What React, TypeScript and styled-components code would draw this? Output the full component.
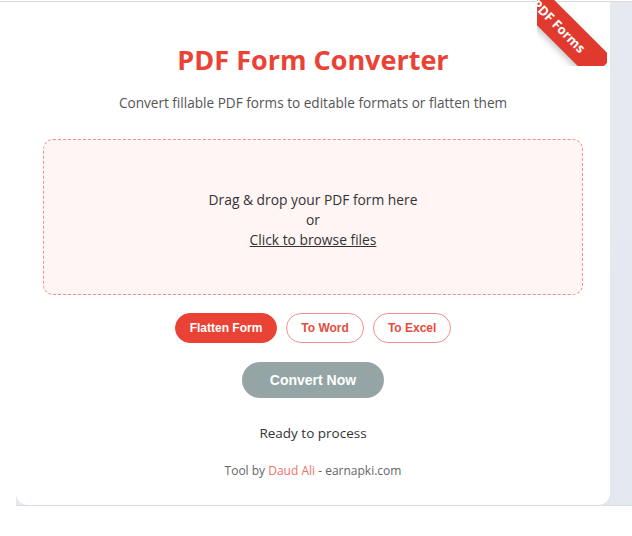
import React from 'react';
import styled, { createGlobalStyle } from 'styled-components';

const GlobalStyle = createGlobalStyle`
  html, body {
    margin: 0;
    padding: 0;
    background: #ffffff;
  }
  body {
    font-family: 'Open Sans', 'Noto Sans', sans-serif;
    color: #333333;
  }
  * {
    box-sizing: border-box;
  }
`;

const TopRule = styled.div`
  height: 2px;
  border-bottom: 1px solid #dcdcdc;
`;

const Stage = styled.div`
  margin-left: 16px;
  padding-right: 22px;
  background: linear-gradient(180deg, #e6e9f0 0%, #e3e7ef 100%);
  border-bottom: 1px solid #dadde3;
`;

const Card = styled.div`
  position: relative;
  width: 594px;
  height: 503px;
  background: #ffffff;
  border-radius: 0 0 12px 12px;
  padding: 40px 27px 0;
  display: flex;
  flex-direction: column;
  align-items: center;
`;

const RibbonBox = styled.div`
  position: absolute;
  top: -8px;
  right: 3px;
  width: 70px;
  height: 72px;
  overflow: hidden;
`;

const Ribbon = styled.span`
  position: absolute;
  left: -38px;
  top: 17px;
  width: 120px;
  height: 30px;
  line-height: 30px;
  background: #e03a2f;
  color: #ffffff;
  font-weight: 700;
  font-size: 13px;
  text-align: center;
  transform: rotate(45deg);
  box-shadow: 0 3px 6px rgba(0, 0, 0, 0.22);
`;

const Title = styled.h1`
  margin: 0;
  font-size: 27px;
  line-height: 36px;
  font-weight: 700;
  color: #ea4335;
`;

const Subtitle = styled.p`
  margin: 15px 0 0;
  font-size: 13.6px;
  line-height: 20px;
  color: #555555;
`;

const DropZone = styled.div`
  margin-top: 26px;
  width: 100%;
  height: 156px;
  padding-top: 6px;
  border: 1px dashed #f0908a;
  border-radius: 10px;
  background: #fff5f4;
  display: flex;
  flex-direction: column;
  align-items: center;
  justify-content: center;
  font-size: 13.8px;
  line-height: 20px;
  color: #333333;
`;

const Browse = styled.span`
  text-decoration: underline;
  cursor: pointer;
`;

const Options = styled.div`
  margin-top: 18px;
  display: flex;
  gap: 9px;
`;

const Option = styled.button<{ $active?: boolean }>`
  height: 30px;
  padding: 0 14px;
  border-radius: 15px;
  border: 1px solid ${(p) => (p.$active ? '#ea4335' : '#f0908a')};
  background: ${(p) => (p.$active ? '#ea4335' : '#ffffff')};
  color: ${(p) => (p.$active ? '#ffffff' : '#e74c3c')};
  font-family: 'Liberation Sans', Arial, sans-serif;
  font-weight: 700;
  font-size: 12px;
  cursor: pointer;
`;

const ConvertButton = styled.button`
  margin-top: 19px;
  height: 36px;
  width: 142px;
  border: none;
  border-radius: 18px;
  background: #95a5a6;
  color: #ffffff;
  font-family: 'Liberation Sans', Arial, sans-serif;
  font-weight: 700;
  font-size: 14px;
  cursor: pointer;
`;

const Status = styled.div`
  margin-top: 25px;
  font-size: 13.5px;
  line-height: 20px;
  color: #333333;
`;

const Footer = styled.div`
  margin-top: 19px;
  font-size: 12px;
  line-height: 18px;
  color: #666666;
`;

const Author = styled.span`
  color: #f07167;
`;

const App: React.FC = () => {
  return (
    <>
      <GlobalStyle />
      <TopRule />
      <Stage>
        <Card>
          <RibbonBox>
            <Ribbon>PDF Forms</Ribbon>
          </RibbonBox>
          <Title>PDF Form Converter</Title>
          <Subtitle>Convert fillable PDF forms to editable formats or flatten them</Subtitle>
          <DropZone>
            <div>Drag &amp; drop your PDF form here</div>
            <div>or</div>
            <Browse>Click to browse files</Browse>
          </DropZone>
          <Options>
            <Option $active>Flatten Form</Option>
            <Option>To Word</Option>
            <Option>To Excel</Option>
          </Options>
          <ConvertButton>Convert Now</ConvertButton>
          <Status>Ready to process</Status>
          <Footer>
            Tool by <Author>Daud Ali</Author> - earnapki.com
          </Footer>
        </Card>
      </Stage>
    </>
  );
};

export default App;
